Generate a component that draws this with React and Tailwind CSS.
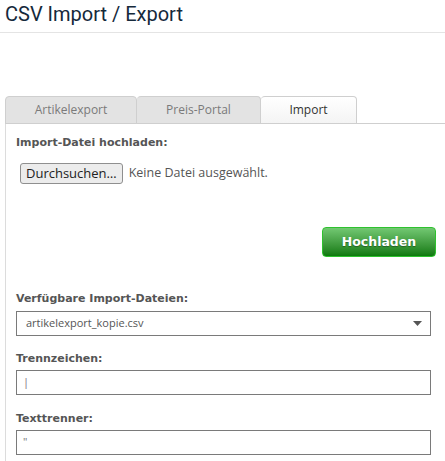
export default function App() {
  const body = { fontFamily: '"Open Sans", "DejaVu Sans", sans-serif' };
  const bold = { fontFamily: '"DejaVu Sans", sans-serif' };
  return (
    <div className="w-[445px] h-[461px] bg-white overflow-hidden">
      <div className="h-[33px] border-b border-[#e4e4e4] pl-[5px]">
        <h1 className="text-[20px] leading-[28px] text-[#15293b]" style={{ fontFamily: 'Roboto, sans-serif' }}>
          CSV Import / Export
        </h1>
      </div>
      <div className="mt-[63px] pl-[5px]">
        <div className="flex items-end border-b border-[#cfcfcf] h-[28px]" style={body}>
          <div className="w-[132px] h-[28px] -mb-px flex items-center justify-center rounded-t-[4px] border border-[#cfcfcf] bg-[#e3e3e3] text-[12px] text-[#7a7a7a]">
            Artikelexport
          </div>
          <div className="w-[124px] h-[28px] -mb-px flex items-center justify-center rounded-t-[4px] border border-l-0 border-[#cfcfcf] bg-[#e3e3e3] text-[12px] text-[#7a7a7a]">
            Preis-Portal
          </div>
          <div className="w-[96px] h-[28px] -mb-px flex items-center justify-center rounded-t-[4px] border border-l-0 border-[#cfcfcf] bg-gradient-to-b from-white to-[#f4f4f4] text-[12px] text-[#333]">
            Import
          </div>
        </div>
        <div className="border-l border-[#dcdcdc] pl-[10px] pr-[14px] pt-[11px] h-[340px]">
          <div className="text-[11px] font-bold text-[#555] leading-[16px]" style={bold}>Import-Datei hochladen:</div>
          <div className="mt-[12px] ml-[4px] flex items-center gap-[6px]" style={body}>
            <button className="h-[21px] px-[5px] rounded-[3px] border border-[#8f8f8f] bg-[#ececec] text-[13px] text-[#222] leading-none">
              Durchsuchen…
            </button>
            <span className="text-[12.5px] text-[#555]">Keine Datei ausgewählt.</span>
          </div>
          <div className="mt-[43px] flex justify-end -mr-[5px]">
            <button
              className="w-[114px] h-[30px] rounded-[4px] border border-[#2ec22e] bg-gradient-to-b from-[#72c872] to-[#0b7a0b] text-white text-[12.5px] font-bold"
              style={{ ...bold, textShadow: '0 1px 1px rgba(0,0,0,0.35)' }}
            >
              Hochladen
            </button>
          </div>
          <div className="mt-[34px] text-[11px] font-bold text-[#555] leading-[16px]" style={bold}>Verfügbare Import-Dateien:</div>
          <div className="mt-[4px] h-[25px] border border-[#7a7a7a] flex items-center justify-between pl-[9px] pr-[8px]" style={body}>
            <span className="text-[11px] text-[#555]">artikelexport_kopie.csv</span>
            <svg width="9" height="5" viewBox="0 0 9 5"><path d="M0 0h9L4.5 5z" fill="#555" /></svg>
          </div>
          <div className="mt-[15px] text-[11px] font-bold text-[#555] leading-[16px]" style={bold}>Trennzeichen:</div>
          <div className="mt-[3px] h-[25px] border border-[#7a7a7a] flex items-center pl-[6px]" style={body}>
            <span className="text-[11px] text-[#7a6a7a]">|</span>
          </div>
          <div className="mt-[16px] text-[11px] font-bold text-[#555] leading-[16px]" style={bold}>Texttrenner:</div>
          <div className="mt-[3px] h-[25px] border border-[#7a7a7a] flex items-center pl-[6px]" style={body}>
            <span className="text-[11px] text-[#777]">"</span>
          </div>
        </div>
      </div>
    </div>
  );
}
